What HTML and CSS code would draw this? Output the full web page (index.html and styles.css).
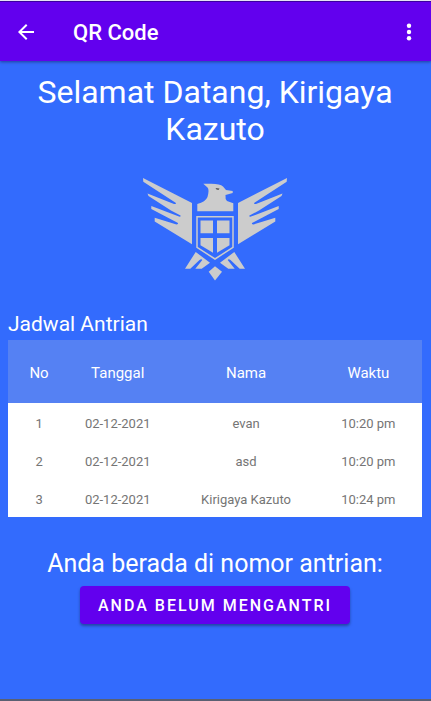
FILE: index.html
```html
<!DOCTYPE html>
<html lang="id">
<head>
<meta charset="utf-8">
<meta name="viewport" content="width=device-width, initial-scale=1">
<title>QR Code</title>
<link rel="stylesheet" href="styles.css">
</head>
<body>
<header class="app-bar">
  <button class="icon-button" type="button" aria-label="Kembali">
    <svg class="icon" viewBox="0 0 24 24" aria-hidden="true"><path d="M20 11H7.83l5.59-5.59L12 4l-8 8 8 8 1.41-1.41L7.83 13H20v-2z"/></svg>
  </button>
  <h1 class="app-title">QR Code</h1>
  <button class="icon-button" type="button" aria-label="Menu">
    <svg class="icon" viewBox="0 0 24 24" aria-hidden="true"><circle cx="12" cy="5.8" r="2.2"/><circle cx="12" cy="12" r="2.2"/><circle cx="12" cy="18.2" r="2.2"/></svg>
  </button>
</header>
<main class="content">
  <h2 class="welcome">Selamat Datang, Kirigaya Kazuto</h2>
  <svg class="emblem" viewBox="143 178 144 103" aria-hidden="true">
    <defs>
      <g id="half">
        <path d="M143 178L192 203V244.3L154.7 221.5V217.7L176.5 224.4Q178.500 224.300 178 223L151.300 209V206L179 216.600Q181.500 216.800 180.500 215.500L171 210.500L148.500 196L147.500 193.600L174 203.900Q176.500 204.200 176 203L143.300 181.700Z"/>
        <path d="M195.700 252L210 262.700L201.700 268.700H195.300L202.300 260Q201.500 258.600 199.500 260L190.300 268.700H185Z"/>
        <path d="M200.500 220.500H213V233.300H200.500ZM200.500 238H213V252.700L200.500 245.300Z"/>
      </g>
    </defs>
    <use href="#half"/>
    <use href="#half" transform="matrix(-1 0 0 1 430 0)"/>
    <path d="M203.300 183.700H210Q220 183.500 223 186.500L226 190L232.700 191V193L225.500 195Q225 199 227 201L233.300 203.300V211.300H197.300V204Q205.500 202 207.500 197Q209.500 189.500 207.500 187.500Z"/>
    <path class="emblem-eye" d="M215.500 188L219.500 188.500L218.500 190L216.500 189.500Z"/>
    <path class="emblem-line" d="M197 216.800H233V247.300L215 259L197 247.300Z"/>
    <path d="M215 266.300L222 271.700L215 280.500L208.700 271.700Z"/>
  </svg>
  <table class="queue">
    <caption>Jadwal Antrian</caption>
    <colgroup><col class="col-no"><col class="col-date"><col class="col-name"><col class="col-time"></colgroup>
    <thead>
      <tr><th scope="col">No</th><th scope="col">Tanggal</th><th scope="col">Nama</th><th scope="col">Waktu</th></tr>
    </thead>
    <tbody>
      <tr><td>1</td><td>02-12-2021</td><td>evan</td><td>10:20 pm</td></tr>
      <tr><td>2</td><td>02-12-2021</td><td>asd</td><td>10:20 pm</td></tr>
      <tr><td>3</td><td>02-12-2021</td><td>Kirigaya Kazuto</td><td>10:24 pm</td></tr>
    </tbody>
  </table>
  <p class="status">Anda berada di nomor antrian:</p>
  <button class="queue-button" type="button">ANDA BELUM MENGANTRI</button>
</main>
</body>
</html>
```
FILE: styles.css
```css
* { box-sizing: border-box; }
body {
  margin: 0;
  min-height: 100vh;
  display: flex;
  flex-direction: column;
  background: #336bfd;
  border-top: 1px solid #e4e4f4;
  border-bottom: 2px solid #5a6072;
  color: #fff;
  font-family: Roboto, "Liberation Sans", sans-serif;
}
.app-bar {
  display: flex;
  align-items: center;
  padding: 0 6px 0 10px;
  height: 60px;
  background: #6200ee;
  border-top: 1px solid #3c00a0;
  box-shadow: 0 1px 3px rgba(0, 0, 0, 0.4);
}
.icon-button {
  display: flex;
  padding: 4px;
  border: 0;
  background: none;
  color: inherit;
}
.icon {
  width: 24px;
  height: 24px;
  fill: currentColor;
}
.app-title {
  flex: 1;
  margin: 0 0 0 31px;
  padding-top: 2px;
  font-size: 22px;
  font-weight: 500;
}
.content {
  flex: 1;
  display: flex;
  flex-direction: column;
  align-items: center;
  padding: 13px 9px 12px 8px;
}
.welcome {
  margin: 0;
  font-size: 32px;
  line-height: 37px;
  font-weight: 400;
  text-align: center;
}
.emblem {
  width: 144px;
  height: 103px;
  margin-top: 30px;
  fill: #ccc;
}
.emblem-eye { fill: #555; }
.emblem-line {
  fill: none;
  stroke: #ccc;
  stroke-width: 1.5;
}
.queue {
  width: 100%;
  margin-top: 29px;
  table-layout: fixed;
  border-collapse: collapse;
  background: #fff;
  color: #757575;
  font-size: 13px;
  text-align: center;
}
.queue caption {
  padding-bottom: 2px;
  background: #336bfd;
  color: #fff;
  font-size: 21px;
  line-height: 28px;
  text-align: left;
}
.queue th {
  height: 63px;
  padding: 2px 0 0;
  background: #5581f3;
  color: #fff;
  font-size: 15px;
  font-weight: 400;
}
.queue td {
  height: 38px;
  padding: 2px 0 0;
}
.queue th:last-child,
.queue td:last-child { padding-right: 12px; }
.col-no { width: 15%; }
.col-date { width: 23%; }
.col-name { width: 39%; }
.col-time { width: 23%; }
.status {
  margin: 32px 0 0;
  font-size: 25px;
  line-height: 30px;
  text-align: center;
}
.queue-button {
  height: 38px;
  margin-top: 7px;
  padding: 0 18px;
  border: 0;
  border-radius: 4px;
  background: #6200ee;
  box-shadow: 0 2px 3px rgba(0, 0, 0, 0.35);
  color: #fff;
  font: 500 16px Roboto, "Liberation Sans", sans-serif;
  letter-spacing: 2px;
}
```
